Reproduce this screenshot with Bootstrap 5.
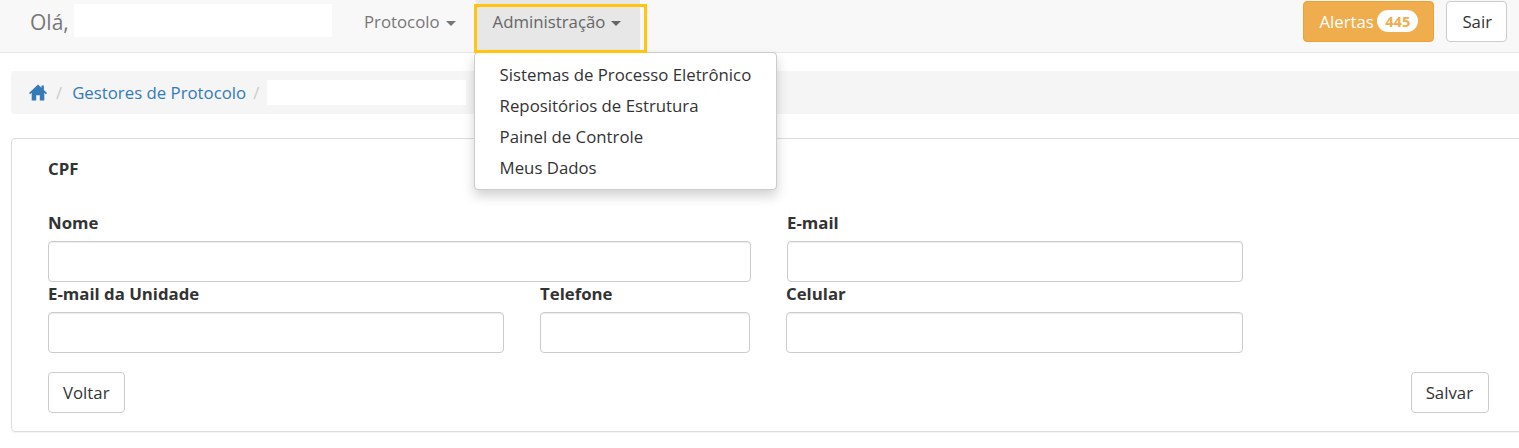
<!DOCTYPE html>
<html lang="pt-BR">
<head>
<meta charset="utf-8">
<title>Gestores de Protocolo</title>
<link href="https://cdn.jsdelivr.net/npm/bootstrap@5.3.0/dist/css/bootstrap.min.css" rel="stylesheet">
<style>
html,body{height:448px;overflow:hidden}
body{font-family:"Open Sans","Liberation Sans",sans-serif;font-size:16.8px;color:#333;background:#fff}
.top-bar{height:53px;background:#f8f8f8;border-bottom:1px solid #e7e7e7;padding:0 12px 0 30px;flex-wrap:nowrap;align-items:flex-start}
.hello{font-size:21px;color:#777;line-height:28px;margin-top:8px;width:44px}
.mask-name{width:258px;height:33px;background:#fff;margin-top:4px;margin-right:16px}
.top-link{display:block;color:#777;text-decoration:none;padding:11px 16px 0;height:52px;line-height:22px}
.top-link.is-open{background:#e7e7e7;color:#666;width:164px;padding-left:17px}
.caret-mark{display:inline-block;border-top:5px solid currentColor;border-left:5px solid transparent;border-right:5px solid transparent;margin-left:6px;vertical-align:2px}
.open-wrap{position:relative;margin-left:4px}
.focus-frame{position:absolute;left:-2px;top:4px;width:173px;height:49px;border:3px solid #ffc510;pointer-events:none;z-index:1001}
.admin-menu{position:absolute;top:52px;left:-2px;width:303px;height:138px;margin:0;padding:7px 0;border:1px solid #ccc;border-radius:4px;box-shadow:0 6px 12px rgba(0,0,0,.18);display:block;z-index:1000}
.admin-menu .dropdown-item{padding:0 25px;height:31px;line-height:30px;color:#333;font-size:16.8px}
.alert-btn{background:#f0ad4e;border:1px solid #eea236;color:#fff;font-size:16.8px;height:41px;padding:0 14px 0 15px;margin-top:1px;border-radius:4px;line-height:38px;white-space:nowrap}
.alert-count{display:inline-block;background:#fff;color:#f0ad4e;font-size:14.7px;font-weight:700;border-radius:11px;height:22px;line-height:22px;padding:0 8px;margin:0 1px 0 -1px;vertical-align:1px}
.plain-btn{background:#fff;border:1px solid #ccc;color:#333;font-size:16.8px;height:41px;padding:0 14px;border-radius:4px;line-height:38px}
.sair-btn{margin-top:1px;margin-left:12px;padding:0 14px 0 15px}
.save-btn{padding:0 15px 0 14px}
.crumb-bar{margin:18px -40px 0 11px;height:43px;background:#f5f5f5;border-radius:4px;padding:0 18px;display:flex;align-items:center;margin-bottom:24px}
.crumb-bar a{color:#337ab7;text-decoration:none}
.crumb-sep{color:#ccc;margin:0 10px 0 9px}
.crumb-sep.tight{margin:0 8px 0 7px}
.mask-crumb{width:199px;height:25px;background:#fff}
.form-panel{margin:0 -40px 0 11px;height:294px;border:1px solid #ddd;border-radius:4px;padding:19px 0 0 36px;box-shadow:0 1px 1px rgba(0,0,0,.05)}
.form-inner{width:1441px}
.field-label{display:block;font-weight:700;font-size:16.8px;line-height:22px;margin:0 0 7px;color:#333}
.cpf-row{height:54px}
.field-row{display:flex;height:71px}
.field-input{display:block;width:100%;height:41px;border:1px solid #ccc;border-radius:4px;box-shadow:inset 0 1px 1px rgba(0,0,0,.075);background:#fff}
.w-a{width:703px;margin-right:36px}.w-b{width:456px}
.w-c{width:456px;margin-right:36px}.w-d{width:210px;margin-right:36px}.w-e{width:457px}
.action-row{display:flex;justify-content:space-between;margin-top:18px}
</style>
</head>
<body>
<nav class="top-bar d-flex">
  <span class="hello">Olá,</span>
  <span class="mask-name"></span>
  <div class="nav-piece"><a class="top-link" href="#">Protocolo<span class="caret-mark"></span></a></div>
  <div class="open-wrap">
    <a class="top-link is-open" href="#">Administração<span class="caret-mark"></span></a>
    <span class="focus-frame"></span>
    <ul class="dropdown-menu admin-menu">
      <li><a class="dropdown-item" href="#">Sistemas de Processo Eletrônico</a></li>
      <li><a class="dropdown-item" href="#">Repositórios de Estrutura</a></li>
      <li><a class="dropdown-item" href="#">Painel de Controle</a></li>
      <li><a class="dropdown-item" href="#">Meus Dados</a></li>
    </ul>
  </div>
  <div class="ms-auto d-flex">
    <button type="button" class="btn alert-btn">Alertas <span class="alert-count">445</span></button>
    <button type="button" class="btn plain-btn sair-btn">Sair</button>
  </div>
</nav>
<div class="crumb-bar">
  <a href="#" aria-label="Início" class="d-flex"><svg width="18" height="17" viewBox="0 0 20 18" preserveAspectRatio="none"><path fill="#337ab7" d="M10 .5 0 9.6l1.2 1.3L3 9.3V17.5h5v-5.5h4v5.5h5V9.3l1.8 1.6L20 9.6l-3.5-3.2V1.5h-2.6v2.5z"/></svg></a>
  <span class="crumb-sep">/</span>
  <a href="#">Gestores de Protocolo</a>
  <span class="crumb-sep tight">/</span>
  <span class="mask-crumb"></span>
</div>
<main class="form-panel">
  <div class="form-inner">
    <div class="cpf-row"><span class="field-label">CPF</span></div>
    <div class="field-row">
      <div class="w-a"><label class="field-label">Nome</label><input class="field-input" type="text"></div>
      <div class="w-b"><label class="field-label">E-mail</label><input class="field-input" type="text"></div>
    </div>
    <div class="field-row">
      <div class="w-c"><label class="field-label">E-mail da Unidade</label><input class="field-input" type="text"></div>
      <div class="w-d"><label class="field-label">Telefone</label><input class="field-input" type="text"></div>
      <div class="w-e"><label class="field-label">Celular</label><input class="field-input" type="text"></div>
    </div>
    <div class="action-row">
      <button type="button" class="btn plain-btn">Voltar</button>
      <button type="button" class="btn plain-btn save-btn">Salvar</button>
    </div>
  </div>
</main>
<script src="https://cdn.jsdelivr.net/npm/bootstrap@5.3.0/dist/js/bootstrap.bundle.min.js"></script>
</body>
</html>
